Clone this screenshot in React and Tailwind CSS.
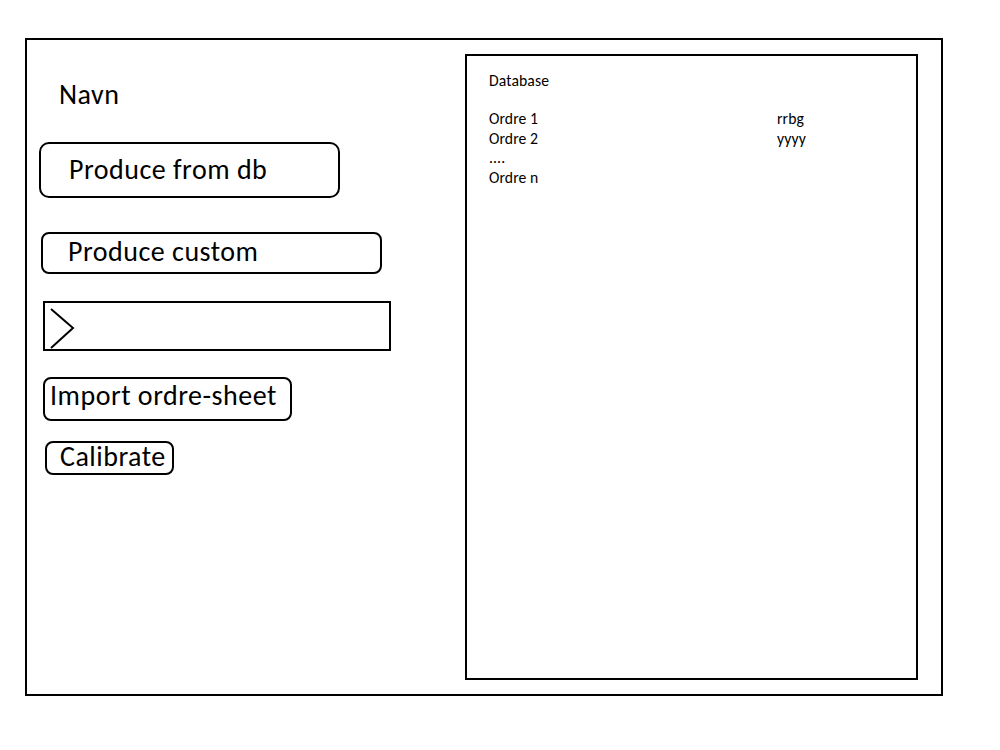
import React from "react";

const font = { fontFamily: "Carlito, Calibri, Lato, 'Open Sans', sans-serif" };

export default function App() {
  return (
    <div className="w-[1000px] h-[750px] bg-white text-black" style={font}>
      <div className="w-[1000px] h-[750px] pt-[38px] pl-[25px]">
        <div className="w-[918px] h-[658px] border-2 border-black flex">
          {/* left column */}
          <div className="flex-1 flex flex-col items-start text-[28px] leading-[34px] tracking-[0.5px]">
            <div className="mt-[38px] ml-[32px]">Navn</div>
            <button className="mt-[30px] ml-[12px] w-[301px] h-[56px] border-2 border-black rounded-[10px] flex items-center pl-[28px] pb-[1px]">
              Produce from db
            </button>
            <button className="mt-[34px] ml-[14px] w-[341px] h-[42px] border-2 border-black rounded-[8px] flex items-center pl-[25px] pb-[2px]">
              Produce custom
            </button>
            <div className="mt-[27px] ml-[16px] w-[348px] h-[50px] border-2 border-black">
              <svg width="40" height="46" viewBox="0 0 40 46" className="block">
                <polyline points="6,6 28,25 6,45" fill="none" stroke="black" strokeWidth="2" />
              </svg>
            </div>
            <button className="mt-[26px] ml-[16px] w-[249px] h-[44px] border-2 border-black rounded-[8px] flex items-center pl-[5px] pb-[7px]">
              Import ordre-sheet
            </button>
            <button className="mt-[20px] ml-[18px] w-[129px] h-[34px] border-2 border-black rounded-[8px] flex items-center pl-[13px] pb-[3px]">
              Calibrate
            </button>
          </div>
          {/* right panel */}
          <div className="mt-[14px] mr-[23px] w-[453px] h-[626px] border-2 border-black pl-[22px] pt-[15px] text-[15.7px] leading-[19.5px] tracking-[0.1px]">
            <div>Database</div>
            <div className="h-[18.5px]"></div>
            <div className="grid grid-cols-[288px_1fr]">
              <div>Ordre 1</div>
              <div>rrbg</div>
              <div>Ordre 2</div>
              <div>yyyy</div>
              <div>....</div>
              <div></div>
              <div>Ordre n</div>
              <div></div>
            </div>
          </div>
        </div>
      </div>
    </div>
  );
}
